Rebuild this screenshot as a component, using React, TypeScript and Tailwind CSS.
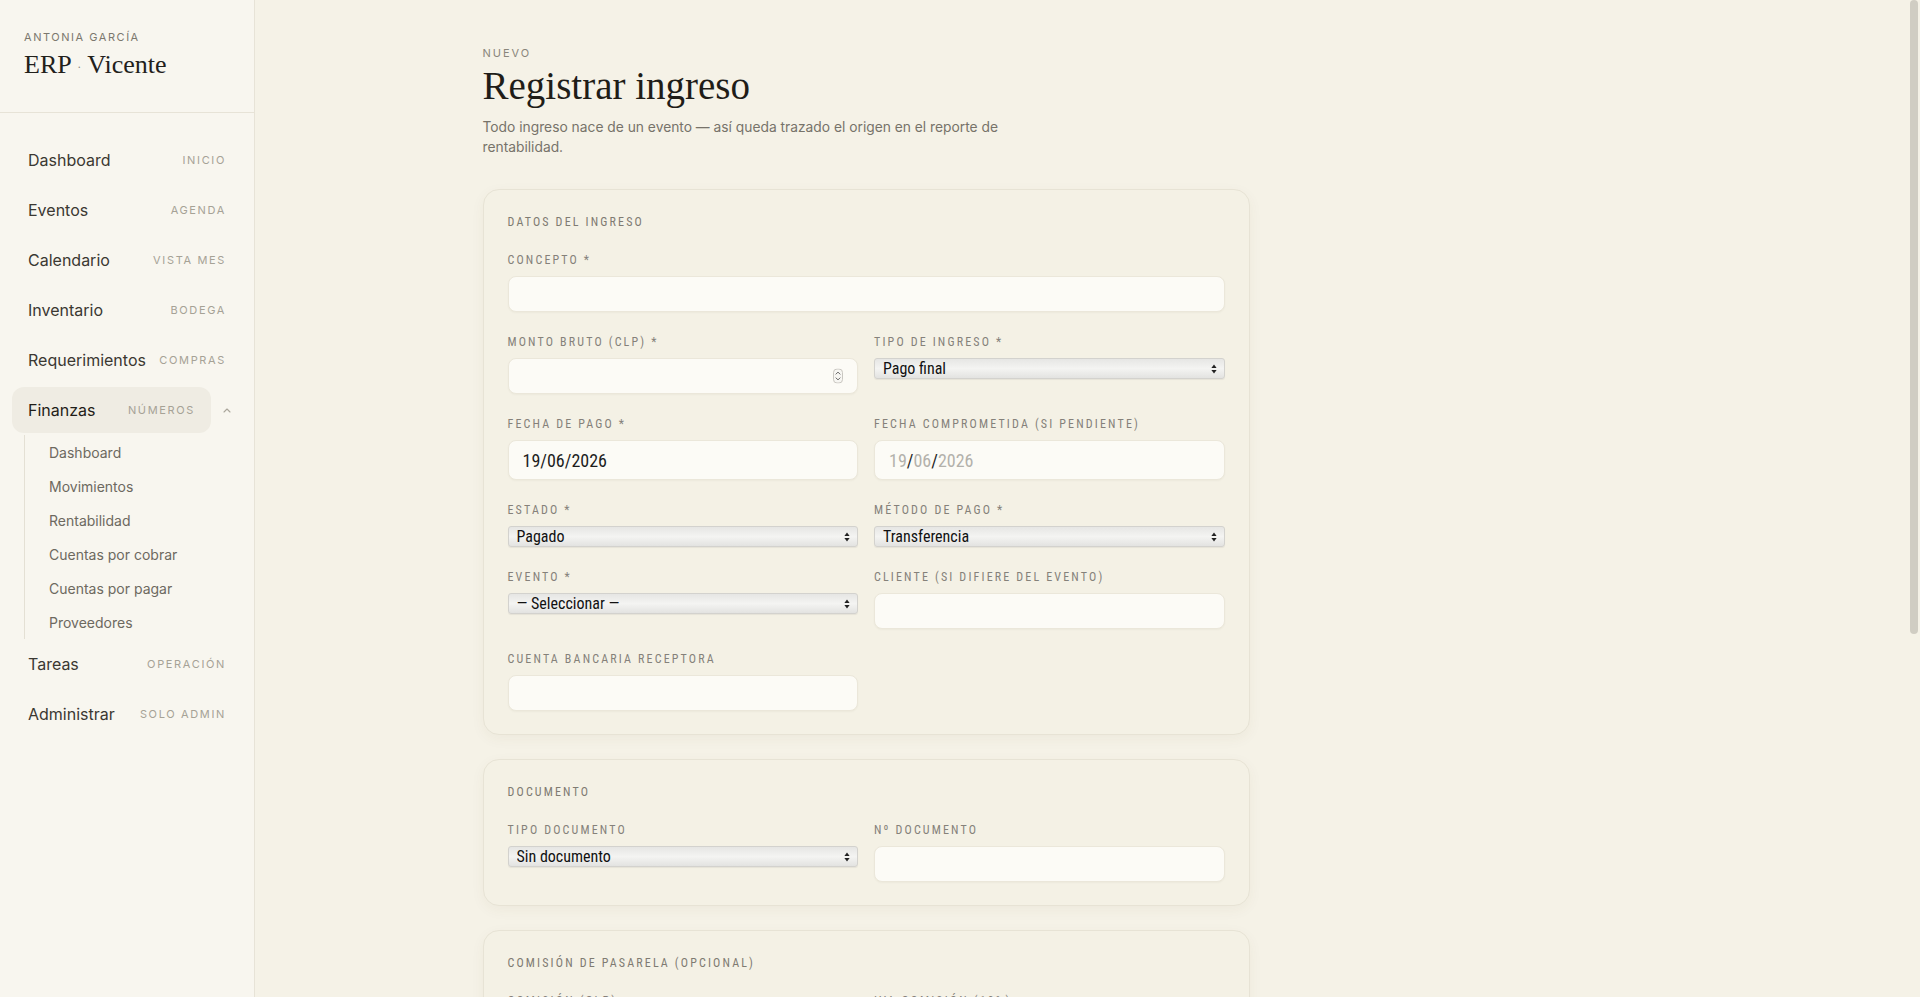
import React from "react";

const narrow = "font-['Liberation_Sans_Narrow','Arial_Narrow','Roboto_Condensed',sans-serif]";

type NavItem = { label: string; tag: string };

const topNav: NavItem[] = [
  { label: "Dashboard", tag: "Inicio" },
  { label: "Eventos", tag: "Agenda" },
  { label: "Calendario", tag: "Vista mes" },
  { label: "Inventario", tag: "Bodega" },
  { label: "Requerimientos", tag: "Compras" },
];

const bottomNav: NavItem[] = [
  { label: "Tareas", tag: "Operación" },
  { label: "Administrar", tag: "Solo admin" },
];

const finanzasSub = [
  "Dashboard",
  "Movimientos",
  "Rentabilidad",
  "Cuentas por cobrar",
  "Cuentas por pagar",
  "Proveedores",
];

function NavRow({ item }: { item: NavItem }) {
  return (
    <a className="mb-1 flex h-[46px] items-center justify-between rounded-xl px-4 text-[16px] text-[#3b3832]">
      <span>{item.label}</span>
      <span className="text-[11px] uppercase tracking-[0.15em] text-[#a6a296]">{item.tag}</span>
    </a>
  );
}

function Sidebar() {
  return (
    <aside className="flex h-full w-[255px] shrink-0 flex-col border-r border-[#e7e3d7] bg-[#f8f6ef] font-['Inter',sans-serif]">
      <div className="border-b border-[#e7e3d7] px-6 pb-[29px] pt-[29px]">
        <div className="h-4 text-[11px] uppercase leading-4 tracking-[0.14em] text-[#7c786e]">
          Antonia García
        </div>
        <div className="mt-1 font-['Liberation_Serif',serif] text-[26px] leading-8 text-[#22201b]">
          ERP <span className="align-middle text-[12px] text-[#8a867c]">·</span> Vicente
        </div>
      </div>
      <nav className="px-3 pt-[24px]">
        {topNav.map((it) => (
          <NavRow key={it.label} item={it} />
        ))}
        <div className="flex items-center">
          <a className="flex h-[46px] w-[199px] items-center justify-between rounded-xl bg-[#efece3] px-4 text-[16px] text-[#1f1d18]">
            <span>Finanzas</span>
            <span className="text-[11px] uppercase tracking-[0.15em] text-[#a6a296]">Números</span>
          </a>
          <div className="flex flex-1 items-center justify-center text-[#aaa69b]">
            <svg width="8" height="5" viewBox="0 0 8 5" fill="none">
              <path d="M1 4l3-3 3 3" stroke="currentColor" strokeWidth="1.1" strokeLinecap="round" strokeLinejoin="round" />
            </svg>
          </div>
        </div>
        <div className="mb-[2px] ml-3 mt-[2px] border-l border-[#e4e0d4] pl-6">
          {finanzasSub.map((s) => (
            <a key={s} className="flex h-[34px] items-center text-[14px] text-[#6d695f]">
              {s}
            </a>
          ))}
        </div>
        {bottomNav.map((it) => (
          <NavRow key={it.label} item={it} />
        ))}
      </nav>
    </aside>
  );
}

function Label({ children }: { children: React.ReactNode }) {
  return (
    <div className={`mb-2 h-4 text-[12px] uppercase leading-4 tracking-[0.18em] text-[#85817a] ${narrow}`}>
      {children}
    </div>
  );
}

function TextInput({ className = "" }: { className?: string }) {
  return (
    <input
      type="text"
      className={`block h-9 w-full rounded-lg border border-[#ebe7da] bg-[#fcfbf6] px-3 text-[14px] text-[#222] shadow-[0_1px_2px_rgba(60,50,20,0.04)] outline-none ${className}`}
    />
  );
}

function NumberInput() {
  return (
    <div className="relative">
      <input
        type="text"
        inputMode="numeric"
        className="block h-9 w-full rounded-lg border border-[#ebe7da] bg-[#fcfbf6] px-3 text-[14px] text-[#222] shadow-[0_1px_2px_rgba(60,50,20,0.04)] outline-none"
      />
      <svg
        className="pointer-events-none absolute right-[15px] top-1/2 -translate-y-1/2"
        width="10"
        height="15"
        viewBox="0 0 10 15"
        fill="none"
      >
        <rect x="0.5" y="0.5" width="9" height="14" rx="3.5" fill="#f7f6f2" stroke="#c9c7c1" />
        <path d="M3 5.6L5 3.6l2 2" stroke="#555" strokeWidth="0.9" strokeLinecap="round" strokeLinejoin="round" />
        <path d="M3 9.4l2 2 2-2" stroke="#555" strokeWidth="0.9" strokeLinecap="round" strokeLinejoin="round" />
      </svg>
    </div>
  );
}

function DateInput({ value, empty = false }: { value: string; empty?: boolean }) {
  const [d, m, y] = value.split("/");
  return (
    <div
      className={`flex h-10 w-full items-center rounded-lg border border-[#ebe7da] bg-[#fcfbf6] px-[14px] text-[18px] shadow-[0_1px_2px_rgba(60,50,20,0.04)] ${narrow}`}
    >
      {empty ? (
        <span>
          <span className="text-[#b3b1ab]">{d}</span>
          <span className="text-[#222]">/</span>
          <span className="text-[#b3b1ab]">{m}</span>
          <span className="text-[#222]">/</span>
          <span className="text-[#b3b1ab]">{y}</span>
        </span>
      ) : (
        <span className="text-[#1d1d1d]">{value}</span>
      )}
    </div>
  );
}

function Select({ value, options }: { value: string; options: string[] }) {
  return (
    <div className="relative">
      <select
        defaultValue={value}
        className={`block h-[21px] w-full appearance-none rounded-[3px] border border-[#d3d2ce] bg-linear-to-b from-[#e6e6e4] via-[#f4f4f2] to-[#e3e3e1] pl-2 pr-6 text-[16px] leading-[19px] text-[#111] shadow-[0_1px_1px_rgba(0,0,0,0.06)] outline-none ${narrow}`}
      >
        {options.map((o) => (
          <option key={o}>{o}</option>
        ))}
      </select>
      <svg
        className="pointer-events-none absolute right-[8px] top-1/2 -translate-y-1/2"
        width="6"
        height="10"
        viewBox="0 0 6 10"
      >
        <path d="M3 0.5L5.6 4H0.4z" fill="#222" />
        <path d="M3 9.5L5.6 6H0.4z" fill="#222" />
      </svg>
    </div>
  );
}

function Card({ title, children }: { title: string; children: React.ReactNode }) {
  return (
    <section className="rounded-2xl border border-[#e7e3d5] bg-[#f4f1e5] px-6 pb-[23px] pt-6 shadow-[0_4px_14px_rgba(90,80,40,0.05)]">
      <div className={`mb-[22px] h-4 text-[12px] uppercase leading-4 tracking-[0.18em] text-[#7f7b72] ${narrow}`}>
        {title}
      </div>
      {children}
    </section>
  );
}

function Field({ label, children, span = false }: { label: string; children: React.ReactNode; span?: boolean }) {
  return (
    <div className={span ? "col-span-2" : ""}>
      <Label>{label}</Label>
      {children}
    </div>
  );
}

const grid = "grid grid-cols-2 items-start gap-x-4 gap-y-[22px]";

function Form() {
  return (
    <div className="flex flex-col gap-6">
      <Card title="Datos del ingreso">
        <div className={grid}>
          <Field label="Concepto *" span>
            <TextInput />
          </Field>
          <Field label="Monto bruto (CLP) *">
            <NumberInput />
          </Field>
          <Field label="Tipo de ingreso *">
            <Select value="Pago final" options={["Anticipo", "Pago parcial", "Pago final", "Otro"]} />
          </Field>
          <Field label="Fecha de pago *">
            <DateInput value="19/06/2026" />
          </Field>
          <Field label="Fecha comprometida (si pendiente)">
            <DateInput value="19/06/2026" empty />
          </Field>
          <Field label="Estado *">
            <Select value="Pagado" options={["Pagado", "Pendiente"]} />
          </Field>
          <Field label="Método de pago *">
            <Select value="Transferencia" options={["Transferencia", "Efectivo", "Tarjeta", "Cheque"]} />
          </Field>
          <Field label="Evento *">
            <Select value="— Seleccionar —" options={["— Seleccionar —"]} />
          </Field>
          <Field label="Cliente (si difiere del evento)">
            <TextInput />
          </Field>
          <Field label="Cuenta bancaria receptora">
            <TextInput />
          </Field>
        </div>
      </Card>

      <Card title="Documento">
        <div className={grid}>
          <Field label="Tipo documento">
            <Select value="Sin documento" options={["Sin documento", "Factura", "Boleta"]} />
          </Field>
          <Field label="Nº documento">
            <TextInput />
          </Field>
        </div>
      </Card>

      <Card title="Comisión de pasarela (opcional)">
        <div className={grid}>
          <Field label="Comisión (CLP)">
            <NumberInput />
          </Field>
          <Field label="IVA comisión (19%)">
            <TextInput />
          </Field>
          <Field label="Pasarela">
            <Select value="— Ninguna —" options={["— Ninguna —", "Webpay", "Mercado Pago"]} />
          </Field>
        </div>
      </Card>

      <Card title="Notas">
        <textarea className="block h-24 w-full resize-none rounded-lg border border-[#ebe7da] bg-[#fcfbf6] px-3 py-2 text-[14px] shadow-[0_1px_2px_rgba(60,50,20,0.04)] outline-none" />
      </Card>

      <div className="flex items-center justify-end gap-3 font-['Inter',sans-serif]">
        <button className="h-10 rounded-lg border border-[#ddd8c8] px-5 text-[14px] text-[#4a473f]">Cancelar</button>
        <button className="h-10 rounded-lg bg-[#2a2722] px-5 text-[14px] text-[#f7f4ea]">Registrar ingreso</button>
      </div>
    </div>
  );
}

export default function App() {
  return (
    <div className="flex h-[997px] w-full overflow-hidden bg-[#f5f2e7]">
      <Sidebar />
      <main className="relative h-full flex-1 overflow-hidden">
        <div className="h-full overflow-hidden pr-[10px]">
          <div className="mx-auto w-full max-w-[1200px] pb-[130px] pt-[45px]">
            <div className="w-[767px]">
              <div className="h-4 font-['Inter',sans-serif] text-[11px] uppercase leading-4 tracking-[0.18em] text-[#8a867b]">
                Nuevo
              </div>
              <h1 className="mt-[3px] font-['Liberation_Serif',serif] text-[39px] leading-[44px] text-[#1f1d18]">
                Registrar ingreso
              </h1>
              <p className="mt-[9px] max-w-[540px] font-['Inter',sans-serif] text-[13.8px] leading-5 text-[#77736a]">
                Todo ingreso nace de un evento — así queda trazado el origen en el reporte de rentabilidad.
              </p>
              <div className="mt-[32px]">
                <Form />
              </div>
            </div>
          </div>
        </div>
        {/* scroll position indicator */}
        <div className="pointer-events-none absolute right-[2px] top-0 h-[634px] w-2 rounded-full bg-[#d0cdc3]" />
      </main>
    </div>
  );
}
